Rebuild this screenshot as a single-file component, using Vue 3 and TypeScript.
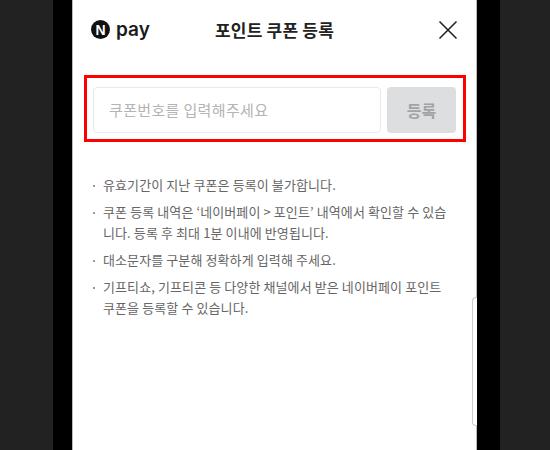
<script setup lang="ts">
const notes: string[][] = [
  ['유효기간이 지난 쿠폰은 등록이 불가합니다.'],
  ['쿠폰 등록 내역은 ‘네이버페이 > 포인트’ 내역에서 확인할 수 있습', '니다. 등록 후 최대 1분 이내에 반영됩니다.'],
  ['대소문자를 구분해 정확하게 입력해 주세요.'],
  ['기프티쇼, 기프티콘 등 다양한 채널에서 받은 네이버페이 포인트', '쿠폰을 등록할 수 있습니다.'],
]
</script>

<template>
  <div class="stage">
    <div class="side"></div>
    <div class="gutter"></div>
    <main class="sheet">
      <header class="head">
        <div class="logo">
          <span class="badge">N</span>
          <span class="pay">pay</span>
        </div>
        <h1 class="title">포인트 쿠폰 등록</h1>
        <svg class="close" width="20" height="20" viewBox="0 0 20 20" aria-label="닫기">
          <path d="M1.5 1.5 L18.5 18.5 M18.5 1.5 L1.5 18.5" fill="none" stroke="#222" stroke-width="1.6" />
        </svg>
      </header>
      <section class="form">
        <div class="input">쿠폰번호를 입력해주세요</div>
        <div class="submit">등록</div>
      </section>
      <ul class="notes">
        <li v-for="(note, i) in notes" :key="i" class="note">
          <span v-for="line in note" :key="line" class="line">{{ line }}</span>
        </li>
      </ul>
      <div class="scroll"></div>
    </main>
    <div class="gutter"></div>
    <div class="side"></div>
  </div>
</template>

<style>
html, body { margin: 0; background: #000; }
</style>

<style scoped>
.stage {
  display: flex;
  width: 550px;
  height: 450px;
  overflow: hidden;
  background: #000;
  font-family: "Noto Sans CJK KR", "Noto Sans", sans-serif;
}
.side { flex: 0 0 53px; background: #222; }
.side:last-child { flex-basis: 50px; }
.gutter { flex: 0 0 19px; }
.gutter:nth-last-child(2) { flex-basis: 23px; }
.sheet {
  position: relative;
  flex: 0 0 405px;
  box-sizing: border-box;
  background: #fff;
  border-left: 1px solid #bbb;
  border-right: 1px solid #bbb;
}
.head {
  display: flex;
  align-items: center;
  height: 60px;
  padding: 0 18px;
}
.logo { display: flex; align-items: center; gap: 6px; width: 124px; margin-top: -1px; }
.badge {
  display: flex;
  align-items: center;
  justify-content: center;
  flex: none;
  width: 19px;
  height: 19px;
  border-radius: 50%;
  background: #111;
  color: #fff;
  font: 800 14px/1 "Liberation Sans", sans-serif;
}
.pay {
  color: #1a1a1a;
  font: 600 19px/1 Inter, sans-serif;
}
.title {
  flex: 1;
  margin: 0;
  color: #222;
  font-size: 17px;
  font-weight: 700;
  letter-spacing: 0.2px;
  line-height: 24px;
}
.close { flex: none; }
.form {
  display: flex;
  gap: 6px;
  margin: 15px 10px 0 11px;
  padding: 9px 7px 6px 6px;
  border: 3px solid #f00;
  height: 46px;
}
.input {
  box-sizing: border-box;
  flex: 0 0 288px;
  height: 46px;
  padding-left: 15px;
  border: 1px solid #e9e9ec;
  border-radius: 4px;
  color: #b4b4b4;
  font-size: 15px;
  letter-spacing: 0.35px;
  line-height: 44px;
}
.submit {
  flex: 0 0 69px;
  height: 46px;
  border-radius: 4px;
  background: #dddee0;
  color: #a2a3a6;
  font-size: 16px;
  font-weight: 700;
  line-height: 46px;
  text-align: center;
}
.notes {
  margin: 32px 0 0;
  padding: 0 0 0 30px;
  list-style: none;
  color: #666;
  font-size: 13px;
  letter-spacing: 0.1px;
  line-height: 21px;
}
.note { position: relative; margin-bottom: 6px; }
.note::before {
  content: "";
  position: absolute;
  left: -10px;
  top: 11px;
  width: 2px;
  height: 2px;
  border-radius: 50%;
  background: #777;
}
.line { display: block; white-space: nowrap; }
.scroll {
  position: absolute;
  right: -1px;
  top: 297px;
  width: 4px;
  height: 127px;
  border: 1px solid #ccc;
  border-right: 0;
  border-radius: 4px 0 0 4px;
  background: #fff;
}
</style>
